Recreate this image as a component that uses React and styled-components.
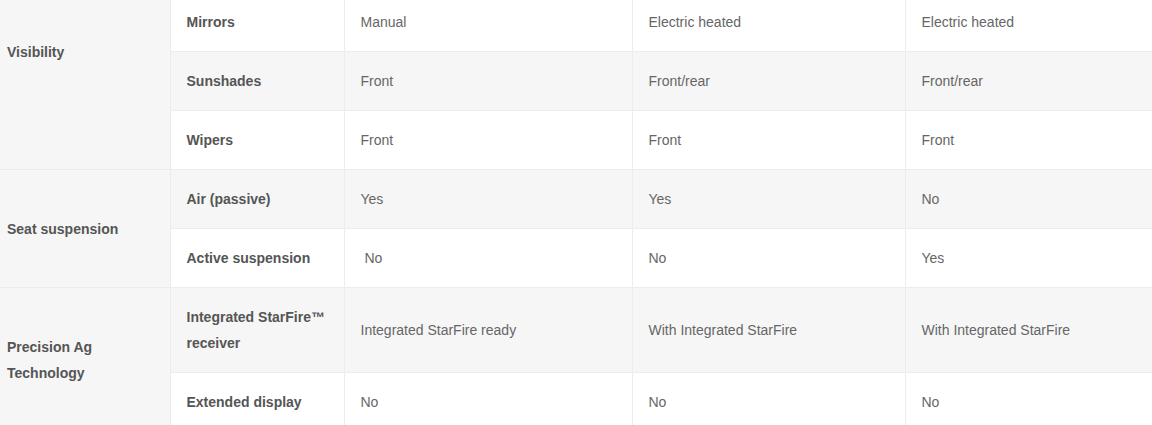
import styled, { createGlobalStyle } from "styled-components";

const GlobalStyle = createGlobalStyle`
  html, body {
    margin: 0;
    padding: 0;
    background: #fff;
    overflow: hidden;
  }
  body {
    font-family: "Liberation Sans", Arial, sans-serif;
  }
`;

const columns = [170, 174, 288, 273, 247];

const groups = [
  {
    name: "Visibility",
    lift: 59,
    rows: [
      { label: "Mirrors", values: ["Manual", "Electric heated", "Electric heated"] },
      { label: "Sunshades", values: ["Front", "Front/rear", "Front/rear"] },
      { label: "Wipers", values: ["Front", "Front", "Front"] },
    ],
  },
  {
    name: "Seat suspension",
    rows: [
      { label: "Air (passive)", values: ["Yes", "Yes", "No"] },
      { label: "Active suspension", values: ["\u00a0No", "No", "Yes"] },
    ],
  },
  {
    name: "Precision Ag Technology",
    rows: [
      {
        label: "Integrated StarFire\u2122 receiver",
        values: ["Integrated StarFire ready", "With Integrated StarFire", "With Integrated StarFire"],
      },
      { label: "Extended display", values: ["No", "No", "No"] },
    ],
  },
];

function SpecTable() {
  let index = 0;
  return (
    <Table>
      <colgroup>
        {columns.map((w, i) => (
          <Col key={i} $width={w} />
        ))}
      </colgroup>
      <tbody>
        {groups.map((group) =>
          group.rows.map((row, i) => {
            const shaded = index++ % 2 === 1;
            return (
              <Row key={row.label} $shaded={shaded}>
                {i === 0 && (
                  <GroupCell rowSpan={group.rows.length} $lift={group.lift || 0}>
                    {group.name}
                  </GroupCell>
                )}
                <LabelCell>{row.label}</LabelCell>
                {row.values.map((v, j) => (
                  <ValueCell key={j}>{v}</ValueCell>
                ))}
              </Row>
            );
          })
        )}
      </tbody>
    </Table>
  );
}

export default function App() {
  return (
    <>
      <GlobalStyle />
      <Page>
        <SpecTable />
      </Page>
    </>
  );
}

const Page = styled.div`
  width: 1152px;
  height: 425px;
  overflow: hidden;
`;

const Table = styled.table`
  margin-top: -8px;
  width: 1152px;
  table-layout: fixed;
  border-collapse: collapse;
  font-size: 14px;
  line-height: 26px;
  color: #666;
`;

const Col = styled.col`
  width: ${(p) => p.$width}px;
`;

const Row = styled.tr`
  background: ${(p) => (p.$shaded ? "#f6f6f6" : "#fff")};
`;

const Cell = styled.td`
  border: 1px solid #ececec;
  padding: 16px 16px;
  vertical-align: middle;
  text-align: left;
`;

const GroupCell = styled(Cell)`
  background: #f6f6f6;
  padding: 16px 8px ${(p) => 16 + p.$lift}px 7px;
  border-left: none;
  font-weight: bold;
  color: #555;
`;

const LabelCell = styled(Cell)`
  font-weight: bold;
  color: #555;
`;

const ValueCell = styled(Cell)`
  color: #666;
`;
